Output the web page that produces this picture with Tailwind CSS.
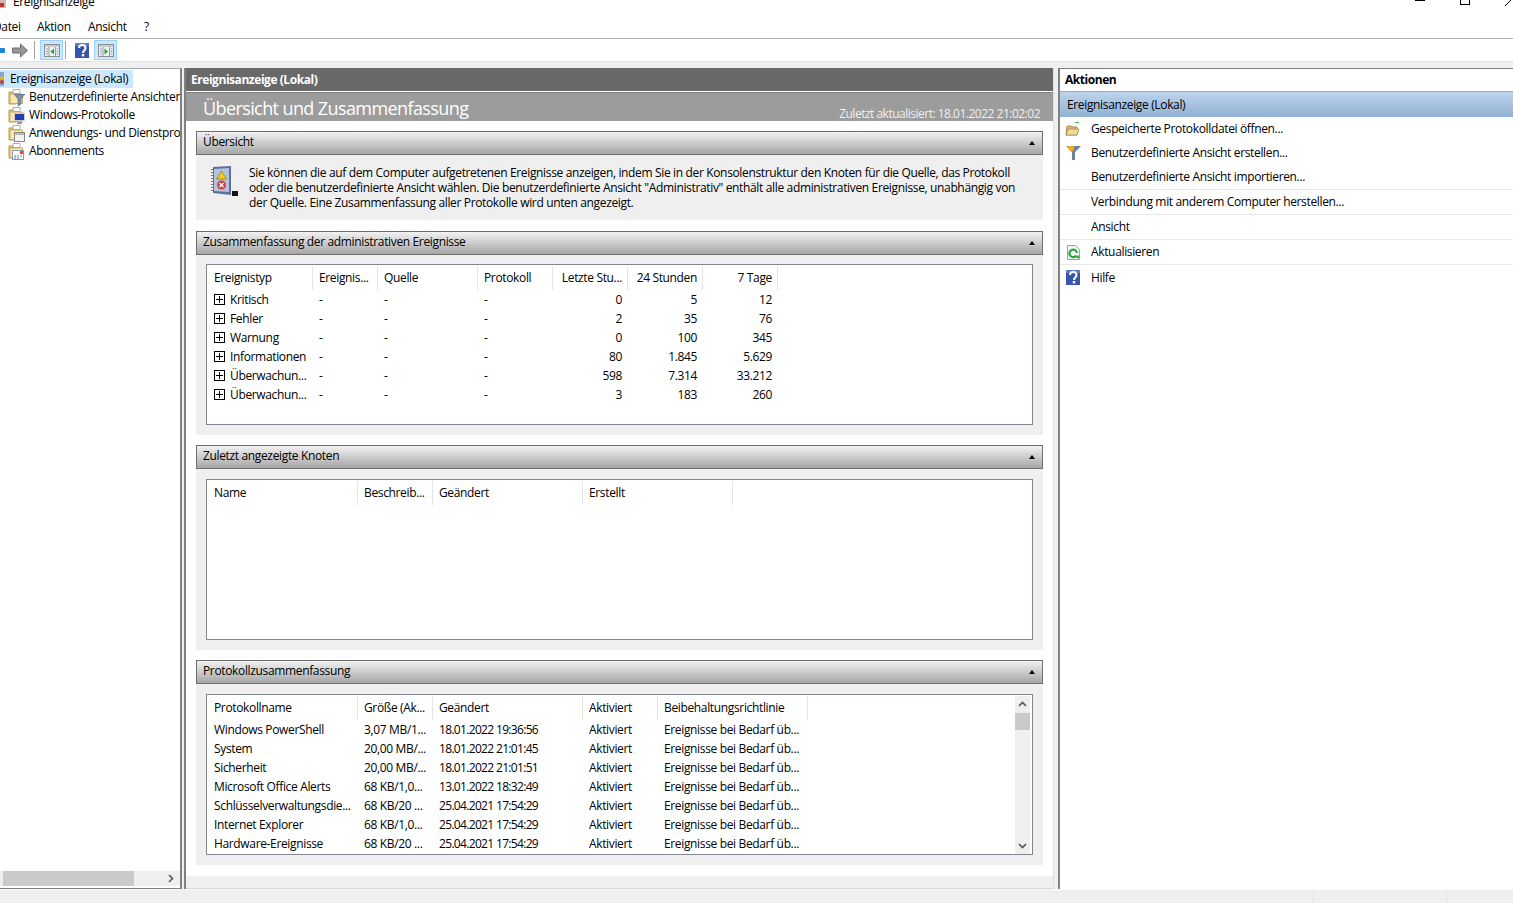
<!DOCTYPE html>
<html lang="de">
<head>
<meta charset="UTF-8">
<title>Ereignisanzeige</title>
<script src="https://cdn.jsdelivr.net/npm/@tailwindcss/browser@4"></script>
</head>
<body class="bg-[#efefef]">
<svg class="hidden">
  <defs>
    <symbol id="folder" viewBox="0 0 16 16">
      <path d="M1 3h5l1 1h1v11H1z" fill="#e8c877" stroke="#b79a55"/>
      <path d="M5 .5h7v4H5z" fill="#fff" stroke="#9a9a9a" stroke-width=".8"/>
      <path d="M2 5h12.500v9.500H2z" fill="#fbe6ab" stroke="#c9ab62"/>
    </symbol>
    <symbol id="help" viewBox="0 0 14 15">
      <rect width="14" height="15" fill="#3a56ac"/>
      <path d="M0 0h14v3H0z" fill="#5f7bd0"/>
      <path d="M4 5c0-4 6.500-4 6.500 0 0 2.500-2.500 2.500-2.500 5" fill="none" stroke="#fff" stroke-width="2"/>
      <rect x="6.800" y="11" width="2.400" height="2.400" fill="#fff"/>
    </symbol>
    <symbol id="plus" viewBox="0 0 11 11">
      <rect x=".5" y=".5" width="10" height="10" fill="#fff" stroke="#000"/>
      <path d="M2 5.500h7M5.500 2v7" stroke="#000"/>
    </symbol>
    <symbol id="tri" viewBox="0 0 6 4">
      <path d="M3 0l3 4H0z" fill="#000"/>
    </symbol>
  </defs>
</svg>

<div class="relative flex h-[903px] w-[1513px] flex-col overflow-hidden bg-[#efefef] text-[12px] tracking-[-0.35px] text-black font-['Open_Sans',sans-serif]">

  <!-- title bar, cut off by the top of the picture -->
  <div class="flex h-3 items-start overflow-hidden bg-white">
    <svg class="-ml-[2px] h-2 w-2 shrink-0" viewBox="0 0 8 8"><rect width="8" height="8" fill="#d8b8b0"/><rect x="1" y="3" width="5" height="4" fill="#c0392b"/></svg>
    <span class="-mt-[7px] ml-[7px] leading-[18px]">Ereignisanzeige</span>
    <div class="ml-auto flex">
      <span class="mr-[35px] h-px w-[10px] bg-black"></span>
      <span class="mr-[35px] h-[5px] w-[10px] border border-t-0 border-black"></span>
      <svg class="mr-0 h-[6px] w-[8px]" viewBox="0 0 8 6"><path d="M0 6L6 0" stroke="#000"/></svg>
    </div>
  </div>

  <!-- menu -->
  <div class="flex h-[27px] items-center border-b border-[#b0b0b0] bg-white pt-[4px]">
    <span class="-ml-[7px] w-[44px]">Datei</span>
    <span class="w-[51px]">Aktion</span>
    <span class="w-[56px]">Ansicht</span>
    <span>?</span>
  </div>

  <!-- toolbar -->
  <div class="flex h-[23px] items-center border-b border-[#e3e3e3] bg-white">
    <span class="-ml-[2px] h-[5px] w-[7px] rounded-[1px] bg-[#1e88d8]"></span>
    <svg class="ml-[7px] h-[15px] w-[16px]" viewBox="0 0 16 15"><path d="M.5 5h8V1l7 6.500-7 6.500v-4h-8z" fill="#969696" stroke="#707070"/></svg>
    <span class="ml-[6px] h-[18px] w-px bg-[#a0a0a0]"></span>
    <div class="ml-[5px] flex h-[20px] w-[23px] items-center justify-center border border-[#99d1ff] bg-[#cce8ff]">
      <svg class="h-[13px] w-[16px]" viewBox="0 0 16 13"><rect x=".5" y=".5" width="15" height="12" fill="#eef3f8" stroke="#8e8e8e"/><path d="M1 1h14v2H1z" fill="#c8ccd0"/><path d="M5 3v9M11.500 3v9" stroke="#9a9a9a"/><path d="M2 5h2M2 7.500h2M2 10h2M12.500 5h2M12.500 7.500h2M12.500 10h2" stroke="#7a98c0"/><path d="M10 4.500v6l-3.500-3z" fill="#2aa02a"/></svg>
    </div>
    <span class="ml-[2px] h-[18px] w-px bg-[#a0a0a0]"></span>
    <svg class="ml-[9px] h-[15px] w-[14px]"><use href="#help"/></svg>
    <div class="ml-[5px] flex h-[20px] w-[23px] items-center justify-center border border-[#99d1ff] bg-[#cce8ff]">
      <svg class="h-[13px] w-[16px]" viewBox="0 0 16 13"><rect x=".5" y=".5" width="15" height="12" fill="#eef3f8" stroke="#8e8e8e"/><path d="M1 1h14v2H1z" fill="#c8ccd0"/><path d="M5 3v9M11.500 3v9" stroke="#9a9a9a"/><path d="M2 5h2M2 7.500h2M2 10h2M12.500 5h2M12.500 7.500h2M12.500 10h2" stroke="#7a98c0"/><path d="M6.500 4.500v6l3.500-3z" fill="#2aa02a"/></svg>
    </div>
  </div>
  <div class="h-[6px]"></div>

  <!-- panes -->
  <div class="flex h-[821px] shrink-0">

    <!-- tree -->
    <div class="flex h-full w-[182px] shrink-0 flex-col border-t border-r-2 border-b border-t-[#a8a8a8] border-r-[#808080] border-b-[#808080] bg-white">
      <div class="h-[802px] overflow-hidden pt-px">
        <div class="flex h-[18px] w-[133px] items-center bg-[#cce8ff]">
          <svg class="h-[14px] w-[4px]" viewBox="0 0 4 14"><rect width="4" height="14" fill="#8ba4d0"/><path d="M2 3l2 4H0z" fill="#f2c500"/><circle cx="2" cy="10" r="2" fill="#d03a3a"/></svg>
          <span class="ml-[6px] leading-[18px]">Ereignisanzeige (Lokal)</span>
        </div>
        <div class="flex h-[18px] items-center whitespace-nowrap">
          <span class="relative ml-[8px] h-4 w-4 shrink-0"><svg class="h-4 w-4"><use href="#folder"/></svg><svg class="absolute top-[5px] left-[6px] h-[12px] w-[11px]" viewBox="0 0 11 12"><path d="M0 0h11L7 5v5l-3 2V5z" fill="#7d92a6" stroke="#4f6070" stroke-width=".6"/></svg></span>
          <span class="ml-[5px]">Benutzerdefinierte Ansichten</span>
        </div>
        <div class="flex h-[18px] items-center whitespace-nowrap">
          <span class="relative ml-[8px] h-4 w-4 shrink-0"><svg class="h-4 w-4"><use href="#folder"/></svg><svg class="absolute top-[6px] left-[6px] h-[11px] w-[11px]" viewBox="0 0 11 11"><rect x=".5" y=".5" width="10" height="7" fill="#1f3fb4" stroke="#d0d0d0"/><path d="M3 9h5v2H3z" fill="#9a9a9a"/></svg></span>
          <span class="ml-[5px]">Windows-Protokolle</span>
        </div>
        <div class="flex h-[18px] items-center overflow-hidden whitespace-nowrap">
          <span class="relative ml-[8px] h-4 w-4 shrink-0"><svg class="h-4 w-4"><use href="#folder"/></svg><svg class="absolute top-[7px] left-[6px] h-[10px] w-[11px]" viewBox="0 0 11 10"><rect x=".5" y=".5" width="10" height="9" fill="#f2f2f2" stroke="#8a8a8a"/><path d="M1 1h9v2H1z" fill="#b8b8b8"/></svg></span>
          <span class="ml-[5px]">Anwendungs- und Dienstprotokolle</span>
        </div>
        <div class="flex h-[18px] items-center whitespace-nowrap">
          <span class="relative ml-[8px] h-4 w-4 shrink-0"><svg class="h-4 w-4"><use href="#folder"/></svg><svg class="absolute top-[7px] left-[4px] h-[10px] w-[12px]" viewBox="0 0 12 10"><rect x=".5" y=".5" width="11" height="9" fill="#fff" stroke="#8a9ab0"/><path d="M8 1h3v3H8z" fill="#d84a4a"/><path d="M2 6h2M5 6h2M2 8h2M5 8h2M8 6h2" stroke="#5878b8"/></svg></span>
          <span class="ml-[5px]">Abonnements</span>
        </div>
      </div>
      <!-- horizontal scrollbar -->
      <div class="flex h-[15px] shrink-0 items-center bg-[#efefef] pl-[3px]">
        <span class="h-[15px] w-[131px] bg-[#cacaca]"></span>
        <svg class="ml-[34px] h-[9px] w-[6px]" viewBox="0 0 6 9"><path d="M1 1l3.500 3.500L1 8" fill="none" stroke="#555" stroke-width="1.600"/></svg>
      </div>
    </div>

    <!-- center -->
    <div class="ml-[2px] flex h-full w-[870px] shrink-0 flex-col border-r border-l-2 border-r-[#e0e0e0] border-l-[#808080] bg-white">
      <div class="flex h-[23px] shrink-0 items-center bg-[#696969] pt-px pl-[5px] font-bold tracking-[-0.45px] text-white">Ereignisanzeige (Lokal)</div>
      <div class="h-px shrink-0 bg-white"></div>
      <div class="flex h-[29px] shrink-0 items-end justify-between border-t border-[#808080] bg-[#9c9c9c] pr-[13px] pl-[17px] text-white">
        <span class="text-[18px] leading-[26px] tracking-[-0.6px]">Übersicht und Zusammenfassung</span>
        <span class="leading-[14px] tracking-[-0.5px] text-[#f0f0f0]">Zuletzt aktualisiert: 18.01.2022 21:02:02</span>
      </div>

      <div class="flex-1 overflow-hidden pt-[10px] pl-[10px]">
        <!-- overview -->
        <section class="mb-[11px] w-[847px]">
          <div class="flex h-[24px] items-center justify-between border border-[#6e6e6e] bg-gradient-to-b from-[#f2f2f2] to-[#a6a6a6] pr-[7px] pb-[2px] pl-[6px]">
            <span>Übersicht</span><svg class="mt-[2px] h-1 w-[6px]"><use href="#tri"/></svg>
          </div>
          <div class="flex h-[65px] bg-[#efefef] pt-[11px] pl-[14px]">
            <svg class="h-[31px] w-[29px] shrink-0" viewBox="0 0 29 31">
              <path d="M22 25h6v5h-6z" fill="#111"/>
              <path d="M3 1l18-1v29l-18-2z" fill="#5c6f9e"/>
              <path d="M4 3l15-1v24l-15-1z" fill="#b4c4dc"/>
              <path d="M2 3v1M2 6v1M2 9v1M2 12v1M2 15v1M2 18v1M2 21v1M2 24v1" stroke="#777" stroke-width="2"/>
              <path d="M11.500 5l5 8h-10z" fill="#f4cc1f" stroke="#7a6a10" stroke-width=".6"/>
              <circle cx="11.500" cy="19" r="4.500" fill="#d0404a"/>
              <path d="M9.500 17l4 4M13.500 17l-4 4" stroke="#fff" stroke-width="1.400"/>
            </svg>
            <p class="ml-[10px] -mt-[1px] leading-[15px] whitespace-nowrap">Sie können die auf dem Computer aufgetretenen Ereignisse anzeigen, indem Sie in der Konsolenstruktur den Knoten für die Quelle, das Protokoll<br>oder die benutzerdefinierte Ansicht wählen. Die benutzerdefinierte Ansicht "Administrativ" enthält alle administrativen Ereignisse, unabhängig von<br>der Quelle. Eine Zusammenfassung aller Protokolle wird unten angezeigt.</p>
          </div>
        </section>

        <!-- admin events -->
        <section class="mb-[10px] w-[847px]">
          <div class="flex h-[24px] items-center justify-between border border-[#6e6e6e] bg-gradient-to-b from-[#f2f2f2] to-[#a6a6a6] pr-[7px] pb-[2px] pl-[6px]">
            <span>Zusammenfassung der administrativen Ereignisse</span><svg class="mt-[2px] h-1 w-[6px]"><use href="#tri"/></svg>
          </div>
          <div class="h-[180px] bg-[#efefef] pt-[9px] pl-[10px]">
            <div class="h-[161px] w-[827px] overflow-hidden border border-[#828790] bg-white">
              <table class="table-fixed whitespace-nowrap">
                <colgroup><col class="w-[105px]"><col class="w-[65px]"><col class="w-[100px]"><col class="w-[75px]"><col class="w-[75px]"><col class="w-[75px]"><col class="w-[75px]"></colgroup>
                <thead>
                  <tr class="h-[25px]">
                    <th class="p-0 pt-px text-left font-normal"><div class="-mr-px h-[24px] border-r border-[#e5e5e5] pl-[7px] leading-[23px]">Ereignistyp</div></th>
                    <th class="p-0 pt-px text-left font-normal"><div class="-mr-px h-[24px] border-r border-[#e5e5e5] pl-[7px] leading-[23px]">Ereignis...</div></th>
                    <th class="p-0 pt-px text-left font-normal"><div class="-mr-px h-[24px] border-r border-[#e5e5e5] pl-[7px] leading-[23px]">Quelle</div></th>
                    <th class="p-0 pt-px text-left font-normal"><div class="-mr-px h-[24px] border-r border-[#e5e5e5] pl-[7px] leading-[23px]">Protokoll</div></th>
                    <th class="p-0 pt-px text-right font-normal"><div class="-mr-px h-[24px] border-r border-[#e5e5e5] pr-[5px] leading-[23px]">Letzte Stu...</div></th>
                    <th class="p-0 pt-px text-right font-normal"><div class="-mr-px h-[24px] border-r border-[#e5e5e5] pr-[5px] leading-[23px]">24 Stunden</div></th>
                    <th class="p-0 pt-px text-right font-normal"><div class="-mr-px h-[24px] border-r border-[#e5e5e5] pr-[5px] leading-[23px]">7 Tage</div></th>
                  </tr>
                </thead>
                <tbody>
                  <tr class="h-[19px]"><td class="p-0 pl-[7px]"><svg class="mr-[5px] mb-[2px] inline h-[11px] w-[11px]"><use href="#plus"/></svg>Kritisch</td><td class="p-0 pl-[7px]">-</td><td class="p-0 pl-[7px]">-</td><td class="p-0 pl-[7px]">-</td><td class="p-0 pr-[5px] text-right">0</td><td class="p-0 pr-[5px] text-right">5</td><td class="p-0 pr-[5px] text-right">12</td></tr>
                  <tr class="h-[19px]"><td class="p-0 pl-[7px]"><svg class="mr-[5px] mb-[2px] inline h-[11px] w-[11px]"><use href="#plus"/></svg>Fehler</td><td class="p-0 pl-[7px]">-</td><td class="p-0 pl-[7px]">-</td><td class="p-0 pl-[7px]">-</td><td class="p-0 pr-[5px] text-right">2</td><td class="p-0 pr-[5px] text-right">35</td><td class="p-0 pr-[5px] text-right">76</td></tr>
                  <tr class="h-[19px]"><td class="p-0 pl-[7px]"><svg class="mr-[5px] mb-[2px] inline h-[11px] w-[11px]"><use href="#plus"/></svg>Warnung</td><td class="p-0 pl-[7px]">-</td><td class="p-0 pl-[7px]">-</td><td class="p-0 pl-[7px]">-</td><td class="p-0 pr-[5px] text-right">0</td><td class="p-0 pr-[5px] text-right">100</td><td class="p-0 pr-[5px] text-right">345</td></tr>
                  <tr class="h-[19px]"><td class="p-0 pl-[7px]"><svg class="mr-[5px] mb-[2px] inline h-[11px] w-[11px]"><use href="#plus"/></svg>Informationen</td><td class="p-0 pl-[7px]">-</td><td class="p-0 pl-[7px]">-</td><td class="p-0 pl-[7px]">-</td><td class="p-0 pr-[5px] text-right">80</td><td class="p-0 pr-[5px] text-right">1.845</td><td class="p-0 pr-[5px] text-right">5.629</td></tr>
                  <tr class="h-[19px]"><td class="p-0 pl-[7px]"><svg class="mr-[5px] mb-[2px] inline h-[11px] w-[11px]"><use href="#plus"/></svg>Überwachun...</td><td class="p-0 pl-[7px]">-</td><td class="p-0 pl-[7px]">-</td><td class="p-0 pl-[7px]">-</td><td class="p-0 pr-[5px] text-right">598</td><td class="p-0 pr-[5px] text-right">7.314</td><td class="p-0 pr-[5px] text-right">33.212</td></tr>
                  <tr class="h-[19px]"><td class="p-0 pl-[7px]"><svg class="mr-[5px] mb-[2px] inline h-[11px] w-[11px]"><use href="#plus"/></svg>Überwachun...</td><td class="p-0 pl-[7px]">-</td><td class="p-0 pl-[7px]">-</td><td class="p-0 pl-[7px]">-</td><td class="p-0 pr-[5px] text-right">3</td><td class="p-0 pr-[5px] text-right">183</td><td class="p-0 pr-[5px] text-right">260</td></tr>
                </tbody>
              </table>
            </div>
          </div>
        </section>

        <!-- recent nodes -->
        <section class="mb-[10px] w-[847px]">
          <div class="flex h-[24px] items-center justify-between border border-[#6e6e6e] bg-gradient-to-b from-[#f2f2f2] to-[#a6a6a6] pr-[7px] pb-[2px] pl-[6px]">
            <span>Zuletzt angezeigte Knoten</span><svg class="mt-[2px] h-1 w-[6px]"><use href="#tri"/></svg>
          </div>
          <div class="h-[181px] bg-[#efefef] pt-[10px] pl-[10px]">
            <div class="h-[161px] w-[827px] overflow-hidden border border-[#828790] bg-white">
              <table class="table-fixed whitespace-nowrap">
                <colgroup><col class="w-[150px]"><col class="w-[75px]"><col class="w-[150px]"><col class="w-[150px]"></colgroup>
                <thead>
                  <tr class="h-[25px]">
                    <th class="p-0 pt-px text-left font-normal"><div class="-mr-px h-[24px] border-r border-[#e5e5e5] pl-[7px] leading-[23px]">Name</div></th>
                    <th class="p-0 pt-px text-left font-normal"><div class="-mr-px h-[24px] border-r border-[#e5e5e5] pl-[7px] leading-[23px]">Beschreib...</div></th>
                    <th class="p-0 pt-px text-left font-normal"><div class="-mr-px h-[24px] border-r border-[#e5e5e5] pl-[7px] leading-[23px]">Geändert</div></th>
                    <th class="p-0 pt-px text-left font-normal"><div class="-mr-px h-[24px] border-r border-[#e5e5e5] pl-[7px] leading-[23px]">Erstellt</div></th>
                  </tr>
                </thead>
              </table>
            </div>
          </div>
        </section>

        <!-- log summary -->
        <section class="w-[847px]">
          <div class="flex h-[24px] items-center justify-between border border-[#6e6e6e] bg-gradient-to-b from-[#f2f2f2] to-[#a6a6a6] pr-[7px] pb-[2px] pl-[6px]">
            <span>Protokollzusammenfassung</span><svg class="mt-[2px] h-1 w-[6px]"><use href="#tri"/></svg>
          </div>
          <div class="h-[181px] bg-[#efefef] pt-[10px] pl-[10px]">
            <div class="relative h-[161px] w-[827px] overflow-hidden border border-[#828790] bg-white">
              <table class="table-fixed whitespace-nowrap">
                <colgroup><col class="w-[150px]"><col class="w-[75px]"><col class="w-[150px]"><col class="w-[75px]"><col class="w-[150px]"></colgroup>
                <thead>
                  <tr class="h-[25px]">
                    <th class="p-0 pt-px text-left font-normal"><div class="-mr-px h-[24px] border-r border-[#e5e5e5] pl-[7px] leading-[23px]">Protokollname</div></th>
                    <th class="p-0 pt-px text-left font-normal"><div class="-mr-px h-[24px] border-r border-[#e5e5e5] pl-[7px] leading-[23px]">Größe (Ak...</div></th>
                    <th class="p-0 pt-px text-left font-normal"><div class="-mr-px h-[24px] border-r border-[#e5e5e5] pl-[7px] leading-[23px]">Geändert</div></th>
                    <th class="p-0 pt-px text-left font-normal"><div class="-mr-px h-[24px] border-r border-[#e5e5e5] pl-[7px] leading-[23px]">Aktiviert</div></th>
                    <th class="p-0 pt-px text-left font-normal"><div class="-mr-px h-[24px] border-r border-[#e5e5e5] pl-[7px] leading-[23px]">Beibehaltungsrichtlinie</div></th>
                  </tr>
                </thead>
                <tbody>
                  <tr class="h-[19px]"><td class="p-0 pl-[7px]">Windows PowerShell</td><td class="p-0 pl-[7px]">3,07 MB/1...</td><td class="p-0 pl-[7px] tracking-[-0.67px]">18.01.2022 19:36:56</td><td class="p-0 pl-[7px]">Aktiviert</td><td class="p-0 pl-[7px]">Ereignisse bei Bedarf üb...</td></tr>
                  <tr class="h-[19px]"><td class="p-0 pl-[7px]">System</td><td class="p-0 pl-[7px]">20,00 MB/...</td><td class="p-0 pl-[7px] tracking-[-0.67px]">18.01.2022 21:01:45</td><td class="p-0 pl-[7px]">Aktiviert</td><td class="p-0 pl-[7px]">Ereignisse bei Bedarf üb...</td></tr>
                  <tr class="h-[19px]"><td class="p-0 pl-[7px]">Sicherheit</td><td class="p-0 pl-[7px]">20,00 MB/...</td><td class="p-0 pl-[7px] tracking-[-0.67px]">18.01.2022 21:01:51</td><td class="p-0 pl-[7px]">Aktiviert</td><td class="p-0 pl-[7px]">Ereignisse bei Bedarf üb...</td></tr>
                  <tr class="h-[19px]"><td class="p-0 pl-[7px]">Microsoft Office Alerts</td><td class="p-0 pl-[7px]">68 KB/1,0...</td><td class="p-0 pl-[7px] tracking-[-0.67px]">13.01.2022 18:32:49</td><td class="p-0 pl-[7px]">Aktiviert</td><td class="p-0 pl-[7px]">Ereignisse bei Bedarf üb...</td></tr>
                  <tr class="h-[19px]"><td class="p-0 pl-[7px]">Schlüsselverwaltungsdie...</td><td class="p-0 pl-[7px]">68 KB/20 ...</td><td class="p-0 pl-[7px] tracking-[-0.67px]">25.04.2021 17:54:29</td><td class="p-0 pl-[7px]">Aktiviert</td><td class="p-0 pl-[7px]">Ereignisse bei Bedarf üb...</td></tr>
                  <tr class="h-[19px]"><td class="p-0 pl-[7px]">Internet Explorer</td><td class="p-0 pl-[7px]">68 KB/1,0...</td><td class="p-0 pl-[7px] tracking-[-0.67px]">25.04.2021 17:54:29</td><td class="p-0 pl-[7px]">Aktiviert</td><td class="p-0 pl-[7px]">Ereignisse bei Bedarf üb...</td></tr>
                  <tr class="h-[19px]"><td class="p-0 pl-[7px]">Hardware-Ereignisse</td><td class="p-0 pl-[7px]">68 KB/20 ...</td><td class="p-0 pl-[7px] tracking-[-0.67px]">25.04.2021 17:54:29</td><td class="p-0 pl-[7px]">Aktiviert</td><td class="p-0 pl-[7px]">Ereignisse bei Bedarf üb...</td></tr>
                </tbody>
              </table>
              <!-- vertical scrollbar -->
              <div class="absolute top-px right-[2px] bottom-0 flex w-[15px] flex-col items-center bg-[#efefef]">
                <svg class="mt-[5px] h-[6px] w-[9px]" viewBox="0 0 9 6"><path d="M1 5l3.500-3.500L8 5" fill="none" stroke="#555" stroke-width="1.600"/></svg>
                <span class="mt-[6px] h-[17px] w-[15px] bg-[#cacaca]"></span>
                <svg class="mt-auto mb-[5px] h-[6px] w-[9px]" viewBox="0 0 9 6"><path d="M1 1l3.500 3.500L8 1" fill="none" stroke="#555" stroke-width="1.600"/></svg>
              </div>
            </div>
          </div>
        </section>
      </div>
      <div class="h-[13px] shrink-0 border-b border-[#d8d8d8] bg-[#efefef]"></div>
    </div>

    <!-- actions -->
    <div class="ml-[4px] flex h-full flex-1 flex-col border-t border-l-2 border-t-[#808080] border-l-[#808080] bg-white">
      <div class="flex h-[23px] shrink-0 items-center border-b border-[#a8a8a8] pl-[5px] font-bold tracking-[-0.45px]">Aktionen</div>
      <div class="flex h-[25px] shrink-0 items-center bg-gradient-to-b from-[#bdd4ec] to-[#90b1d3] pl-[7px]">Ereignisanzeige (Lokal)</div>

      <div class="flex h-[24px] items-center">
        <svg class="ml-[5px] h-[14px] w-[15px]" viewBox="0 0 15 14"><path d="M10 .5h4" stroke="#40c040"/><path d="M2 4h4l1 1h5v8H1z" fill="#d6b56c" stroke="#a88f50"/><path d="M3 7h11l-2 6H1z" fill="#f2d99a" stroke="#b59a58"/></svg>
        <span class="ml-[11px]">Gespeicherte Protokolldatei öffnen...</span>
      </div>
      <div class="flex h-[24px] items-center">
        <svg class="ml-[6px] h-[14px] w-[15px]" viewBox="0 0 15 14"><path d="M0 0h15L9 6v8H6V6z" fill="#6f8196"/><path d="M1 0h7v3.500A3.500 3.500 0 0 1 4 5z" fill="#f6a81c"/></svg>
        <span class="ml-[10px]">Benutzerdefinierte Ansicht erstellen...</span>
      </div>
      <div class="flex h-[25px] items-center border-b border-[#e8e8e8] pl-[31px]">Benutzerdefinierte Ansicht importieren...</div>
      <div class="flex h-[25px] items-center border-b border-[#e8e8e8] pl-[31px]">Verbindung mit anderem Computer herstellen...</div>
      <div class="flex h-[25px] items-center border-b border-[#e8e8e8] pl-[31px]">Ansicht</div>
      <div class="flex h-[25px] items-center border-b border-[#e8e8e8]">
        <svg class="ml-[7px] h-[15px] w-[13px]" viewBox="0 0 13 15"><path d="M.5.500h8l4 4v10H.5z" fill="#f6f6f6" stroke="#a0a0a0"/><path d="M10 8a3.800 3.800 0 1 0-1 3" fill="none" stroke="#2aa83a" stroke-width="2.200"/><path d="M7 10.500h5V14z" fill="#2aa83a"/></svg>
        <span class="ml-[11px]">Aktualisieren</span>
      </div>
      <div class="flex h-[25px] items-center">
        <svg class="ml-[6px] h-[15px] w-[14px]"><use href="#help"/></svg>
        <span class="ml-[11px]">Hilfe</span>
      </div>
    </div>
  </div>

  <!-- status bar -->
  <div class="flex flex-1 border-t border-[#f8f8f8]">
    <span class="ml-auto h-full w-px bg-[#e2e2e2]"></span>
    <span class="ml-[132px] mr-[66px] h-full w-px bg-[#e2e2e2]"></span>
  </div>
</div>
</body>
</html>
